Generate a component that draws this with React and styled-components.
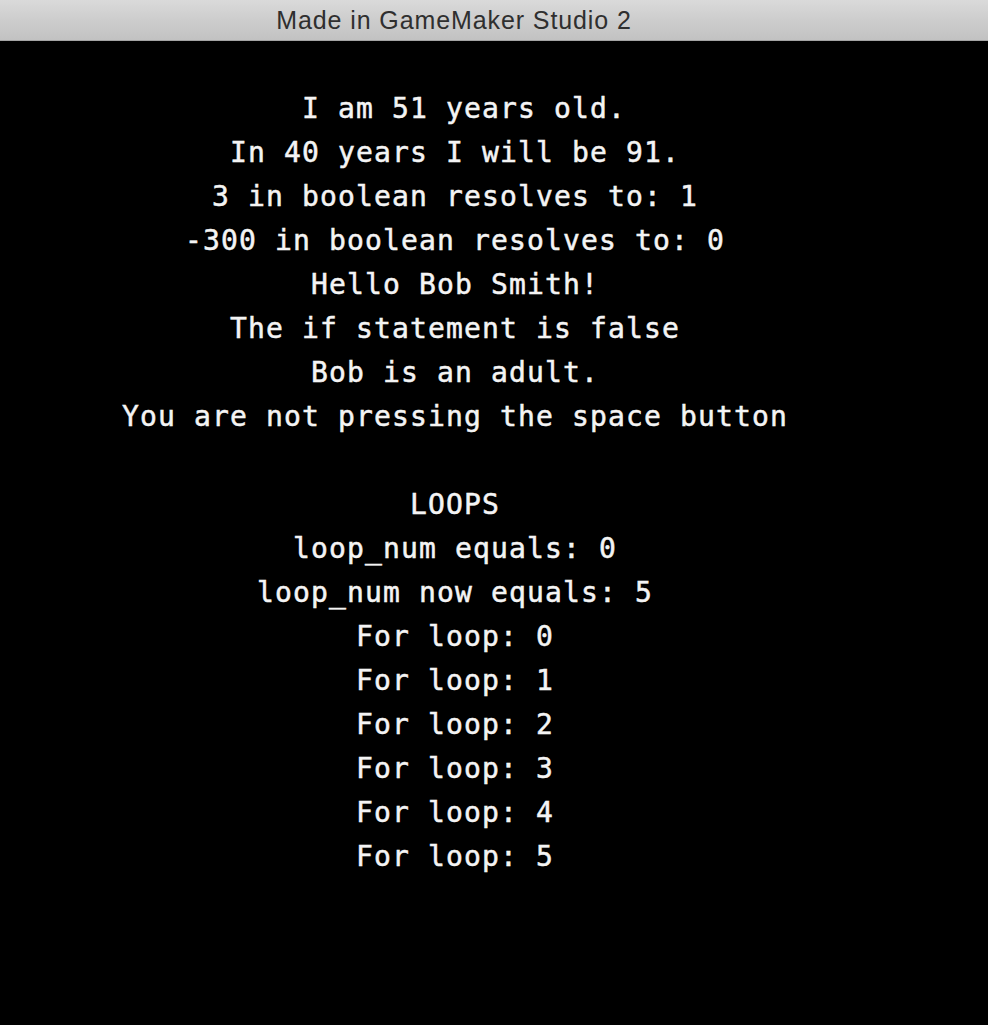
import React from "react";
import styled, { createGlobalStyle } from "styled-components";

const GlobalStyle = createGlobalStyle`
  html, body {
    margin: 0;
    padding: 0;
    background: #000;
  }
  #root {
    min-height: 100vh;
  }
`;

const lines = [
  "\u00a0I am 51 years old.",
  "In 40 years I will be 91.",
  "3 in boolean resolves to: 1",
  "-300 in boolean resolves to: 0",
  "Hello Bob Smith!",
  "The if statement is false",
  "Bob is an adult.",
  "You are not pressing the space button",
  "",
  "LOOPS",
  "loop_num equals: 0",
  "loop_num now equals: 5",
  "For loop: 0",
  "For loop: 1",
  "For loop: 2",
  "For loop: 3",
  "For loop: 4",
  "For loop: 5",
];

const App = () => {
  return (
    <Window>
      <GlobalStyle />
      <TitleBar>
        <Title>Made in GameMaker Studio 2</Title>
      </TitleBar>
      <Canvas>
        {lines.map((text, i) => (
          <Line key={i}>{text}</Line>
        ))}
      </Canvas>
    </Window>
  );
};

export default App;

const Window = styled.div`
  display: flex;
  flex-direction: column;
  width: 988px;
  height: 1025px;
  background: #000;
  overflow: hidden;
`;

const TitleBar = styled.div`
  display: flex;
  justify-content: center;
  align-items: center;
  height: 40px;
  padding-right: 80px;
  background: linear-gradient(#dadada, #cdcdcd 50%, #c2c2c2);
  border-bottom: 1px solid #a4a4a4;
  flex-shrink: 0;
`;

const Title = styled.span`
  font-family: "Liberation Sans", Arial, sans-serif;
  font-size: 25px;
  color: #2f2f2f;
  letter-spacing: 0.9px;
`;

const Canvas = styled.div`
  display: flex;
  flex-direction: column;
  align-items: center;
  padding: 46px 78px 0 0;
  flex: 1;
`;

const Line = styled.div`
  font-family: "DejaVu Sans Mono", "Liberation Mono", monospace;
  font-size: 28px;
  letter-spacing: 1.14px;
  line-height: 44px;
  height: 44px;
  color: #f4f4f4;
  white-space: pre;
  -webkit-text-stroke: 0.5px #f4f4f4;
`;
